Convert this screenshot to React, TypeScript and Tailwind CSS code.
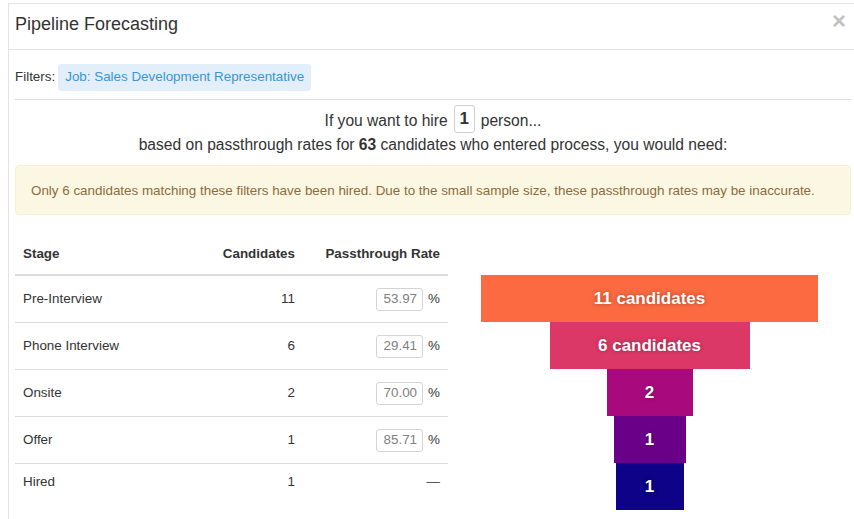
import React from "react";

type Stage = {
  name: string;
  count: number;
  rate: string | null;
};

const stages: Stage[] = [
  { name: "Pre-Interview", count: 11, rate: "53.97" },
  { name: "Phone Interview", count: 6, rate: "29.41" },
  { name: "Onsite", count: 2, rate: "70.00" },
  { name: "Offer", count: 1, rate: "85.71" },
  { name: "Hired", count: 1, rate: null },
];

const funnel = [
  { label: "11 candidates", width: 337, color: "#fb6a40" },
  { label: "6 candidates", width: 200, color: "#dc3867" },
  { label: "2", width: 86, color: "#a80a7e" },
  { label: "1", width: 72, color: "#6a0088" },
  { label: "1", width: 68, color: "#0d0288" },
];

function RateInput({ value }: { value: string }) {
  return (
    <span className="inline-flex h-[23px] w-[47px] items-center justify-end rounded-[3px] border border-[#d4d4d4] pr-[5px] text-[#808080]">
      {value}
    </span>
  );
}

function StageTable() {
  return (
    <div className="w-[433px] text-[13.4px] text-[#333]">
      <div className="flex h-[42px] items-center border-b-2 border-[#dcdcdc] font-bold">
        <div className="flex-1 px-2">Stage</div>
        <div className="w-[100px] px-2 text-right">Candidates</div>
        <div className="w-[145px] px-2 text-right">Passthrough Rate</div>
      </div>
      {stages.map((s, i) => (
        <div
          key={s.name}
          className={
            i < stages.length - 1
              ? "flex h-[47px] items-center border-b border-[#dcdcdc]"
              : "flex h-[37px] items-center"
          }
        >
          <div className="flex-1 px-2">{s.name}</div>
          <div className="w-[100px] px-2 text-right">{s.count}</div>
          <div className="flex w-[145px] items-center justify-end gap-[5px] px-2">
            {s.rate ? (
              <>
                <RateInput value={s.rate} />
                <span>%</span>
              </>
            ) : (
              <span className="text-[#555]">—</span>
            )}
          </div>
        </div>
      ))}
    </div>
  );
}

function Funnel() {
  return (
    <div className="flex flex-1 flex-col items-center pt-[41px]">
      {funnel.map((f, i) => (
        <div
          key={i}
          className="flex h-[47px] items-center justify-center text-[17px] font-bold text-white [text-shadow:0_0_4px_rgba(0,0,0,0.35)]"
          style={{ width: f.width, backgroundColor: f.color }}
        >
          {f.label}
        </div>
      ))}
    </div>
  );
}

export default function App() {
  return (
    <div className="h-[519px] w-[854px] overflow-hidden bg-white pl-[8px] pt-[3px] font-['Liberation_Sans',Arial,sans-serif] text-[#333]">
      <div className="h-[600px] w-[849px] border-l border-t border-[#e3e3e3]">
        <div className="flex h-[46px] items-start justify-between border-b border-[#e5e5e5] px-[6px] pt-[8px]">
          <h4 className="text-[18px] leading-[24px]">Pipeline Forecasting</h4>
          <button className="mr-[5px] mt-[-3px] text-[24px] font-bold leading-[24px] text-[#c2c2c2]">
            ×
          </button>
        </div>

        <div className="px-[6px]">
          <div className="flex items-center gap-[3px] border-b border-[#dedede] pb-[8px] pt-[14px] text-[13.4px]">
            <span>Filters:</span>
            <span className="flex h-[27px] items-center rounded-[3px] bg-[#e2effb] px-[7px] text-[#3a95d5]">
              Job: Sales Development Representative
            </span>
          </div>

          <div className="pt-[5px] text-center text-[15.6px]">
            <div className="flex h-[28px] items-center justify-center">
              <span className="pt-[4px]">If you want to hire</span>
              <span className="mx-[6px] flex h-[28px] w-[21px] items-center justify-center rounded-[3px] border border-[#cfcfcf] text-[17px] font-bold">
                1
              </span>
              <span className="pt-[4px]">person...</span>
            </div>
            <div className="leading-[24px]">
              based on passthrough rates for <b>63</b> candidates who entered process, you would need:
            </div>
          </div>

          <div className="mt-[8px] flex h-[50px] items-center rounded-[4px] border border-[#f8eed2] bg-[#fcf7e3] px-[15px] pt-[2px] text-[13.4px] text-[#8a6d3b]">
            Only 6 candidates matching these filters have been hired. Due to the small sample size, these passthrough rates may be inaccurate.
          </div>

          <div className="mt-[19px] flex">
            <StageTable />
            <Funnel />
          </div>
        </div>
      </div>
    </div>
  );
}
